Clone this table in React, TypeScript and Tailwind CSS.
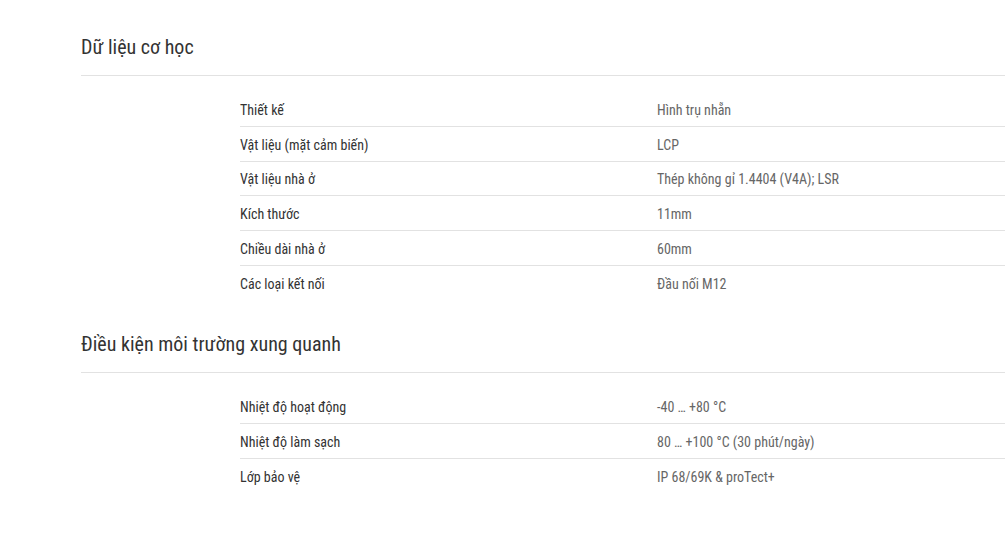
import React from 'react';

type Row = { label: string; value: string };

const SECTIONS: { title: string; rows: Row[] }[] = [
  {
    title: 'Dữ liệu cơ học',
    rows: [
      { label: 'Thiết kế', value: 'Hình trụ nhẵn' },
      { label: 'Vật liệu (mặt cảm biến)', value: 'LCP' },
      { label: 'Vật liệu nhà ở', value: 'Thép không gỉ 1.4404 (V4A); LSR' },
      { label: 'Kích thước', value: '11mm' },
      { label: 'Chiều dài nhà ở', value: '60mm' },
      { label: 'Các loại kết nối', value: 'Đầu nối M12' },
    ],
  },
  {
    title: 'Điều kiện môi trường xung quanh',
    rows: [
      { label: 'Nhiệt độ hoạt động', value: '-40 … +80 °C' },
      { label: 'Nhiệt độ làm sạch', value: '80 … +100 °C (30 phút/ngày)' },
      { label: 'Lớp bảo vệ', value: 'IP 68/69K & proTect+' },
    ],
  },
];

const SpecSection: React.FC<{ title: string; rows: Row[]; first?: boolean }> = ({ title, rows, first }) => (
  <section>
    <h2
      className={`text-[20px] leading-[28px] text-[#333] pb-[14px] border-b border-[#e2e2e2] font-stretch-condensed ${
        first ? 'pt-[33px]' : 'pt-[29px]'
      }`}
    >
      {title}
    </h2>
    <div className={`ml-[159px] ${first ? 'mt-[16px]' : 'mt-[17px]'}`}>
      {rows.map((row, i) => (
        <div
          key={row.label}
          className={`flex h-[34.75px] pt-[3px] items-center text-[14px] font-stretch-condensed ${
            i < rows.length - 1 ? 'border-b border-[#e2e2e2]' : ''
          }`}
        >
          <div className="w-[417px] text-[#333]">{row.label}</div>
          <div className="flex-1 text-[#666]">{row.value}</div>
        </div>
      ))}
    </div>
  </section>
);

export default function App() {
  return (
    <div className="min-h-[534px] bg-white pl-[81px] overflow-hidden" style={{ fontFamily: 'Roboto, "Noto Sans", sans-serif' }}>
      {SECTIONS.map((s, i) => (
        <SpecSection key={s.title} title={s.title} rows={s.rows} first={i === 0} />
      ))}
    </div>
  );
}
